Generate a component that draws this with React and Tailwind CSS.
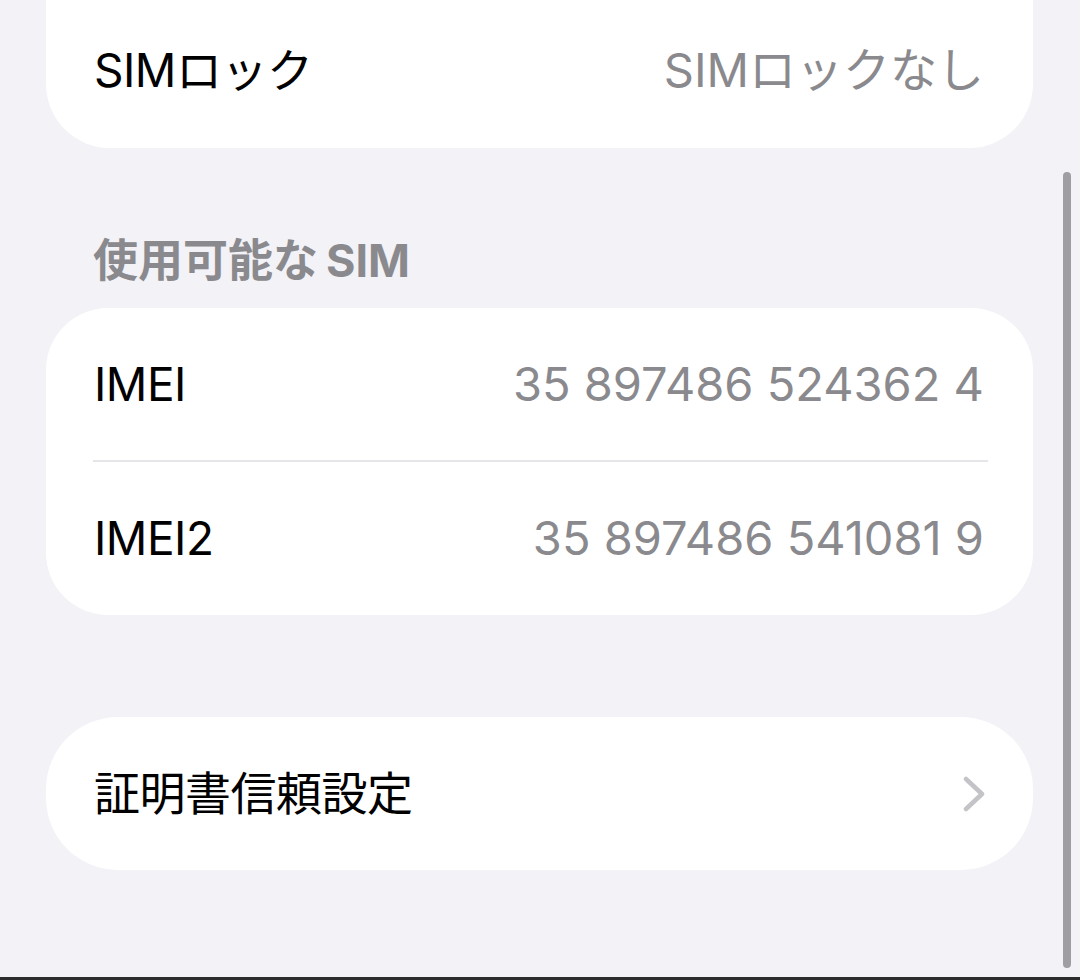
const font = { fontFamily: '"Inter", "Noto Sans CJK JP", sans-serif' };

function Row({ label, value, chevron, className = "" }) {
  return (
    <div className={"flex items-center justify-between pl-[48px] pr-[49px] " + className}>
      <span className="text-[46px] text-black tracking-[-0.5px]">{label}</span>
      {value && <span className="text-[47px] text-[#8a8a8e]">{value}</span>}
      {chevron && (
        <svg width="24" height="36" viewBox="0 0 24 36" className="mr-[-2px]">
          <polyline
            points="4,3 20,18 4,33"
            fill="none"
            stroke="#c4c4c8"
            strokeWidth="4.5"
            strokeLinecap="round"
            strokeLinejoin="round"
          />
        </svg>
      )}
    </div>
  );
}

export default function App() {
  return (
    <div className="relative h-[980px] w-[1080px] overflow-hidden bg-[#f2f2f7]" style={font}>
      <div className="pl-[46px] pr-[47px]">
        {/* SIM lock card, top cut off */}
        <div className="rounded-b-[64px] bg-white">
          <Row label="SIMロック" value="SIMロックなし" className="h-[148px] pb-[8px]" />
        </div>

        {/* Section header */}
        <div className="mt-[88px] mb-[22px] flex items-center pl-[47px] text-[45px] font-bold leading-[50px] text-[#8a8a8e]">
          <span>使用可能な</span>
          <span className="ml-[8px]">SIM</span>
        </div>

        {/* IMEI card */}
        <div className="rounded-[62px] bg-white">
          <Row label="IMEI" value="35 897486 524362 4" className="h-[152px]" />
          <div className="ml-[47px] mr-[45px] h-[2px] bg-[#e5e5ea]" />
          <Row label="IMEI2" value="35 897486 541081 9" className="h-[153px]" />
        </div>

        {/* Certificate trust settings */}
        <div className="mt-[102px] rounded-[72px] bg-white">
          <Row label="証明書信頼設定" chevron className="h-[153px]" />
        </div>
      </div>

      {/* scroll indicator */}
      <div className="absolute left-[1063px] top-[172px] h-[796px] w-[8px] rounded-full bg-[#9e9ea3]" />

      {/* bottom edge */}
      <div className="absolute bottom-0 left-0 h-[3px] w-full bg-[#2c2c2e]" />
    </div>
  );
}
